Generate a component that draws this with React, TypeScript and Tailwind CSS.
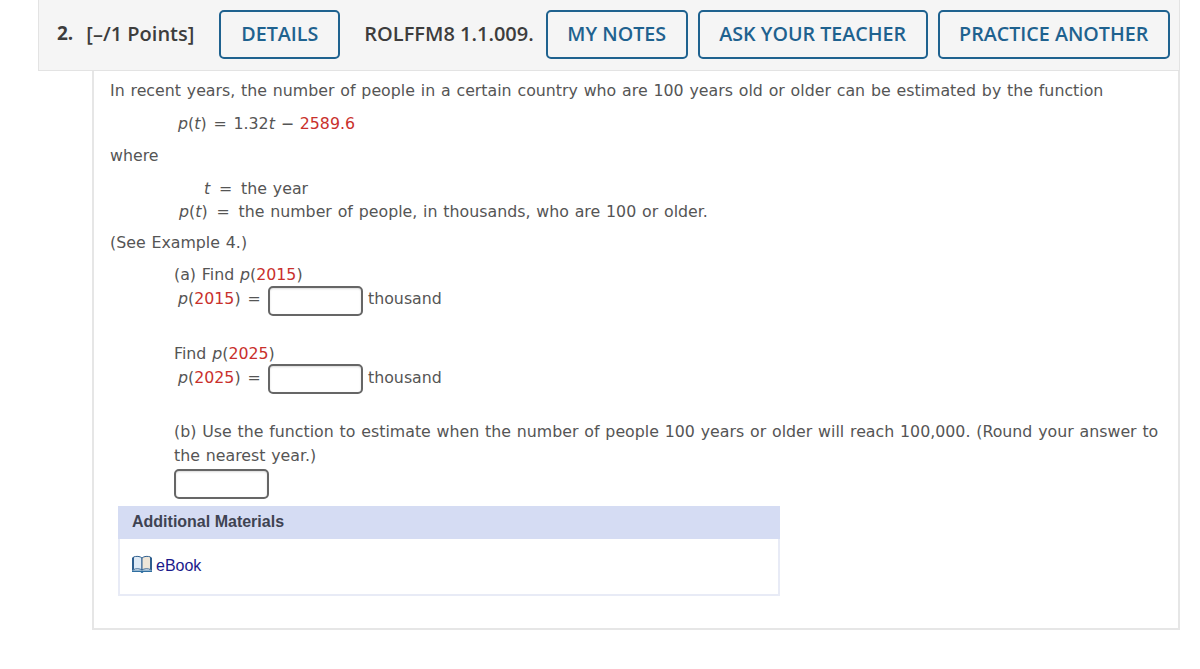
import React from "react";

const R = ({ children }: { children: React.ReactNode }) => <span className="text-[#c9302c]">{children}</span>;
const I = ({ children }: { children: React.ReactNode }) => <i className="italic">{children}</i>;
const Btn = ({ children, w }: { children: React.ReactNode; w: string }) => (
  <button className={`h-[49px] ${w} shrink-0 whitespace-nowrap rounded-[5px] border-[2.5px] border-[#1f628f] text-[19.7px] font-semibold text-[#1f628f]`}>{children}</button>
);
const Box = () => <span className="inline-block h-[30px] w-[95px] rounded-[5px] border-2 border-[#666] bg-white shadow-[inset_0_1px_2px_rgba(0,0,0,0.15)]" />;

export default function App() {
  return (
    <div className="h-[669px] w-[1200px] overflow-hidden bg-white text-[#555] [font-family:'DejaVu_Sans',Verdana,sans-serif]">
      <header className="ml-[38px] flex h-[71px] w-[1142px] items-center whitespace-nowrap border border-t-0 border-[#e3e3e3] bg-[#f5f5f5] pb-[2px] pl-[18px] text-[#3d3d3d] [font-family:'Open_Sans',sans-serif]">
        <span className="mr-[13px] -mt-[1px] text-[19px] font-bold">2.</span>
        <span className="mr-[25px] text-[20px] font-semibold">[–/1 Points]</span>
        <Btn w="w-[121px]">DETAILS</Btn>
        <span className="ml-[24px] mr-[12px] text-[20px] font-semibold">ROLFFM8 1.1.009.</span>
        <Btn w="w-[142px]">MY NOTES</Btn>
        <span className="w-[10px]" />
        <Btn w="w-[230px]">ASK YOUR TEACHER</Btn>
        <span className="w-[10px]" />
        <Btn w="w-[232px]">PRACTICE ANOTHER</Btn>
      </header>
      <main className="ml-[92px] h-[559px] w-[1088px] border-x-2 border-b-2 border-[#e6e6e6] pl-[16px] pr-[14px] pt-[8px] text-[15.8px] leading-[24px] [word-spacing:0.8px]">
        <p className="whitespace-nowrap">In recent years, the number of people in a certain country who are 100 years old or older can be estimated by the function</p>
        <p className="ml-[68px] mt-[9px] whitespace-nowrap"><I>p</I>(<I>t</I>) <span className="mx-[1px]">=</span> 1.32<I>t</I> − <R>2589.6</R></p>
        <p className="mt-[8px]">where</p>
        <p className="ml-[94px] mt-[9px]"><I>t</I> <span className="mx-[3px]">=</span> the year</p>
        <p className="-mt-[1px] ml-[69px] whitespace-nowrap"><I>p</I>(<I>t</I>) <span className="mx-[3px]">=</span> the number of people, in thousands, who are 100 or older.</p>
        <p className="mt-[7px]">(See Example 4.)</p>
        <section className="ml-[64px] mt-[8px]">
          <p>(a) Find <I>p</I>(<R>2015</R>)</p>
          <p className="-mt-[1px] ml-[4px] flex h-[30px] items-center"><span className="mb-[5px] w-[90px]"><I>p</I>(<R>2015</R>) <span className="mx-[1px]">=</span></span><Box /><span className="mb-[5px] ml-[5px]">thousand</span></p>
          <p className="mt-[26px]">Find <I>p</I>(<R>2025</R>)</p>
          <p className="-mt-[2px] ml-[4px] flex h-[30px] items-center"><span className="mb-[3px] w-[90px]"><I>p</I>(<R>2025</R>) <span className="mx-[1px]">=</span></span><Box /><span className="mb-[3px] ml-[5px]">thousand</span></p>
          <p className="mt-[26px] w-[990px]">(b) Use the function to estimate when the number of people 100 years or older will reach 100,000. (Round your answer to the nearest year.)</p>
          <div className="mt-[1px] flex"><Box /></div>
        </section>
        <section className="ml-[8px] mt-[7px] h-[90px] w-[662px] border-2 border-t-0 border-[#e8ebf6] [font-family:'Liberation_Sans',Arial,sans-serif] [word-spacing:0]">
          <h3 className="-mx-[2px] flex h-[33px] items-center bg-[#d5dcf3] pb-[1px] pl-[14px] text-[16px] font-bold text-[#3f4352]">Additional Materials</h3>
          <a className="mt-[15px] flex items-center pl-[11px] text-[16px] text-[#1a1a8c]">
            <svg width="22" height="19" viewBox="0 0 22 19" className="mr-[3px] -mt-[3px]">
              <path d="M1 2.5h1.5v13H1zM19.5 2.5H21v13h-1.5z" fill="#2f5f8f" />
              <path d="M2.5 2C5 1 9 1 11 3v12C9 13.500 5 13.500 2.500 14.500z" fill="#dfeaf5" stroke="#2f5f8f" />
              <path d="M19.500 2C17 1 13 1 11 3v12c2-1.500 6-1.500 8.500-.500z" fill="#efe6d8" stroke="#2f5f8f" />
              <path d="M1 15.500h20v1.500H12.500l-1 1h-1l-1-1H1z" fill="#2f6ea0" />
            </svg>
            eBook
          </a>
        </section>
      </main>
    </div>
  );
}
